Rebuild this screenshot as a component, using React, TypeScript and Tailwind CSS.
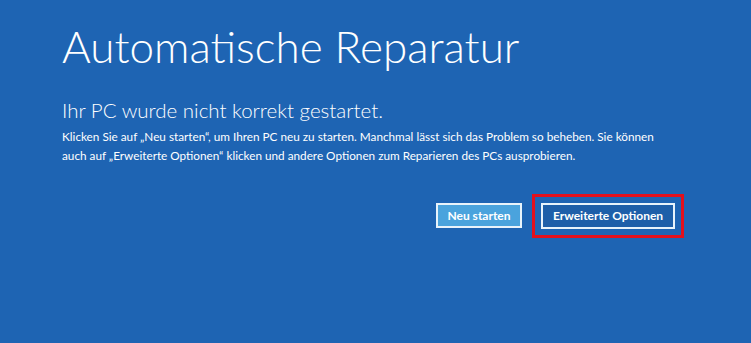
export default function App() {
  return (
    <div className="w-[751px] h-[343px] bg-[#1e64b3] text-white overflow-hidden font-['Lato',sans-serif]">
      <div className="pl-[62px] pt-[16px] w-[675px]">
        <h1 className="text-[44px] font-light leading-[60px]">
          Automatische Reparatur
        </h1>
        <h2 className="mt-[19px] text-[20.5px] font-light leading-[30px]">
          Ihr PC wurde nicht korrekt gestartet.
        </h2>
        <p className="mt-[2px] text-[11.75px] leading-[19px] whitespace-nowrap">
          Klicken Sie auf „Neu starten“, um Ihren PC neu zu starten. Manchmal lässt sich das Problem so beheben. Sie können
          <br />
          auch auf „Erweiterte Optionen“ klicken und andere Optionen zum Reparieren des PCs ausprobieren.
        </p>
        <div className="mt-[38px] flex justify-end gap-[19px]">
          <button className="h-[25px] w-[86px] border-2 border-[#e8f3fb] bg-[#4aa3dd] text-[12px] font-bold leading-none">
            Neu starten
          </button>
          <button className="h-[26px] w-[134px] border-2 border-[#e8f3fb] bg-[#1e5fa9] text-[12px] font-bold leading-none outline-3 outline-[#e3101c] outline-offset-[6px]">
            Erweiterte Optionen
          </button>
        </div>
      </div>
    </div>
  );
}
